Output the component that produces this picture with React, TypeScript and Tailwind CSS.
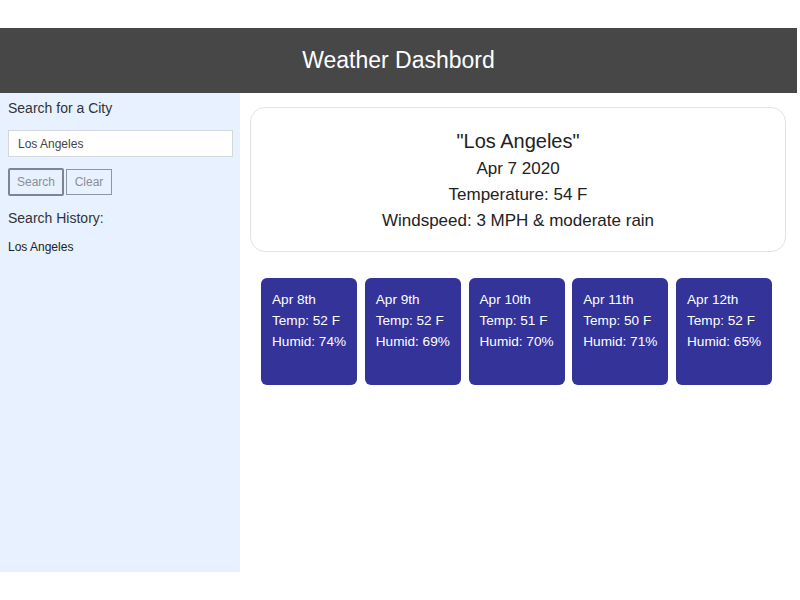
const forecast = [
  { day: 'Apr 8th', temp: '52 F', humid: '74%' },
  { day: 'Apr 9th', temp: '52 F', humid: '69%' },
  { day: 'Apr 10th', temp: '51 F', humid: '70%' },
  { day: 'Apr 11th', temp: '50 F', humid: '71%' },
  { day: 'Apr 12th', temp: '52 F', humid: '65%' },
];

const App = () => {
  return (
    <div className="w-[800px] h-[600px] bg-white pt-[28px] font-['Liberation_Sans',Arial,sans-serif] text-[#222]">
      <header className="w-[797px] h-[65px] bg-[#484747] flex items-center justify-center">
        <h1 className="text-white text-[23px] leading-none">Weather Dashbord</h1>
      </header>

      <div className="flex">
        <aside className="w-[240px] h-[479px] bg-[#e7f1ff] px-[8px] pt-[7px]">
          <p className="text-[14px] leading-[17px] text-[#333]">Search for a City</p>
          <input
            className="mt-[13px] w-[225px] h-[27px] bg-white border border-[#d4d8dd] px-[9px] text-[12px] text-[#444] outline-none"
            defaultValue="Los Angeles"
          />
          <div className="mt-[11px] flex gap-[2px] items-start">
            <button className="h-[28px] w-[56px] border-2 border-[#7b8596] rounded-[2px] bg-[#e7f1ff] text-[12px] text-[#8a8f98]">
              Search
            </button>
            <button className="mt-[1px] h-[26px] w-[46px] border border-[#8f96a3] bg-[#e7f1ff] text-[12px] text-[#8a8f98]">
              Clear
            </button>
          </div>
          <p className="mt-[14px] text-[14px] leading-[17px] text-[#333]">Search History:</p>
          <p className="mt-[13px] text-[12px] leading-[14px] text-[#222]">Los Angeles</p>
        </aside>

        <main className="flex-1 pl-[10px] pt-[14px]">
          <div className="w-[536px] h-[145px] border border-[#e2e2e2] rounded-[15px] flex flex-col items-center pt-[19px] text-[#222]">
            <p className="text-[20px] leading-[29px]">"Los Angeles"</p>
            <p className="text-[17px] leading-[26px]">Apr 7 2020</p>
            <p className="text-[17px] leading-[26px]">Temperature: 54 F</p>
            <p className="text-[17px] leading-[26px]">Windspeed: 3 MPH &amp; moderate rain</p>
          </div>

          <div className="flex gap-[7.75px] pl-[11px] mt-[26px]">
            {forecast.map((f) => (
              <div key={f.day} className="w-[96px] h-[107px] bg-[#333399] rounded-[6px] text-white text-[13.6px] leading-[21px] pl-[11px] pt-[11px]">
                <p>{f.day}</p>
                <p>Temp: {f.temp}</p>
                <p>Humid: {f.humid}</p>
              </div>
            ))}
          </div>
        </main>
      </div>
    </div>
  );
};

export default App;
